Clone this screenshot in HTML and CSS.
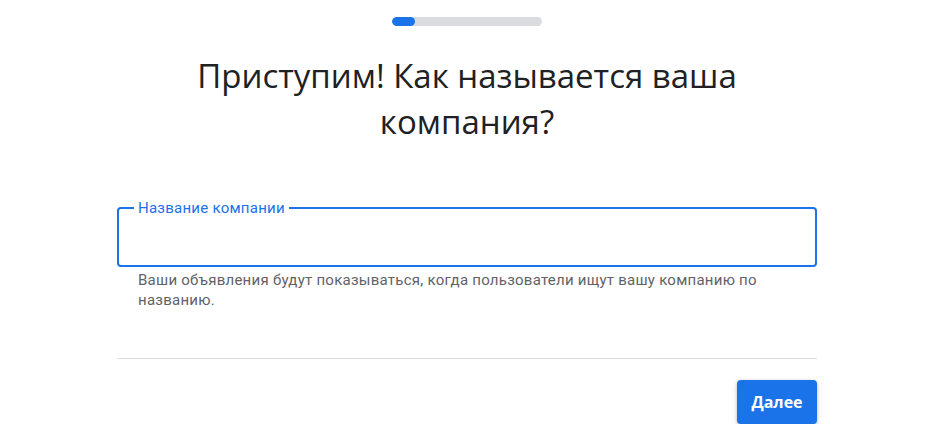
FILE: index.html
```html
<!DOCTYPE html>
<html lang="ru">
  <head>
    <meta charset="UTF-8" />
    <meta name="viewport" content="width=device-width, initial-scale=1.0" />
    <title>Название компании</title>
    <link rel="stylesheet" href="styles.css">
  </head>
  <body>
    <div class="page">
      <main class="step">
        <div class="progress">
          <div class="progress-fill"></div>
        </div>

        <h1 class="title">Приступим! Как называется ваша компания?</h1>

        <fieldset class="field">
          <legend>Название компании</legend>
          <input type="text" class="field-input" />
        </fieldset>
        <p class="hint">
          Ваши объявления будут показываться, когда пользователи ищут вашу компанию по названию.
        </p>

        <div class="footer">
          <button class="btn-next">Далее</button>
        </div>
      </main>
    </div>
  </body>
</html>
```

FILE: styles.css
```css
body {
  margin: 0;
  padding: 0;
  background-color: #fff;
  font-family: Roboto, "Liberation Sans", Arial, sans-serif;
  color: #202124;
}

.page {
  max-width: 934px;
}

.step {
  width: 700px;
  margin: 0 auto;
  display: flex;
  flex-direction: column;
}

.progress {
  align-self: center;
  width: 150px;
  height: 9px;
  margin-top: 17px;
  border-radius: 5px;
  background-color: #dadce0;
  overflow: hidden;
}

.progress-fill {
  width: 23px;
  height: 100%;
  border-radius: 5px;
  background-color: #1a73e8;
}

.title {
  font-family: "Open Sans", sans-serif;
  font-weight: 400;
  font-size: 33px;
  line-height: 46px;
  text-align: center;
  margin: 27px 60px 0;
  color: #202124;
}

.field {
  margin: 55px 0 0;
  padding: 0 12px;
  height: 63px;
  border: 2px solid #1a73e8;
  border-radius: 4px;
}

.field legend {
  font-size: 15px;
  letter-spacing: 0.25px;
  color: #1a73e8;
  padding: 0 4px;
  margin-left: 3px;
  line-height: 16px;
}

.field-input {
  width: 100%;
  border: none;
  outline: none;
  font-size: 16px;
  height: 40px;
  padding: 0;
  background: transparent;
}

.hint {
  margin: 3px 0 0;
  padding: 0 40px 0 21px;
  font-size: 15px;
  letter-spacing: 0.25px;
  line-height: 20px;
  color: #5f6368;
}

.footer {
  margin-top: 48px;
  padding-top: 21px;
  border-top: 1px solid #dadce0;
  display: flex;
  justify-content: flex-end;
}

.btn-next {
  width: 80px;
  height: 44px;
  border: none;
  border-radius: 4px;
  background-color: #1a73e8;
  color: #fff;
  font-family: "Open Sans", sans-serif;
  font-size: 16px;
  font-weight: 700;
  box-shadow: 0 1px 3px rgba(60, 64, 67, 0.3), 0 2px 6px rgba(60, 64, 67, 0.15);
  cursor: pointer;
}
```
